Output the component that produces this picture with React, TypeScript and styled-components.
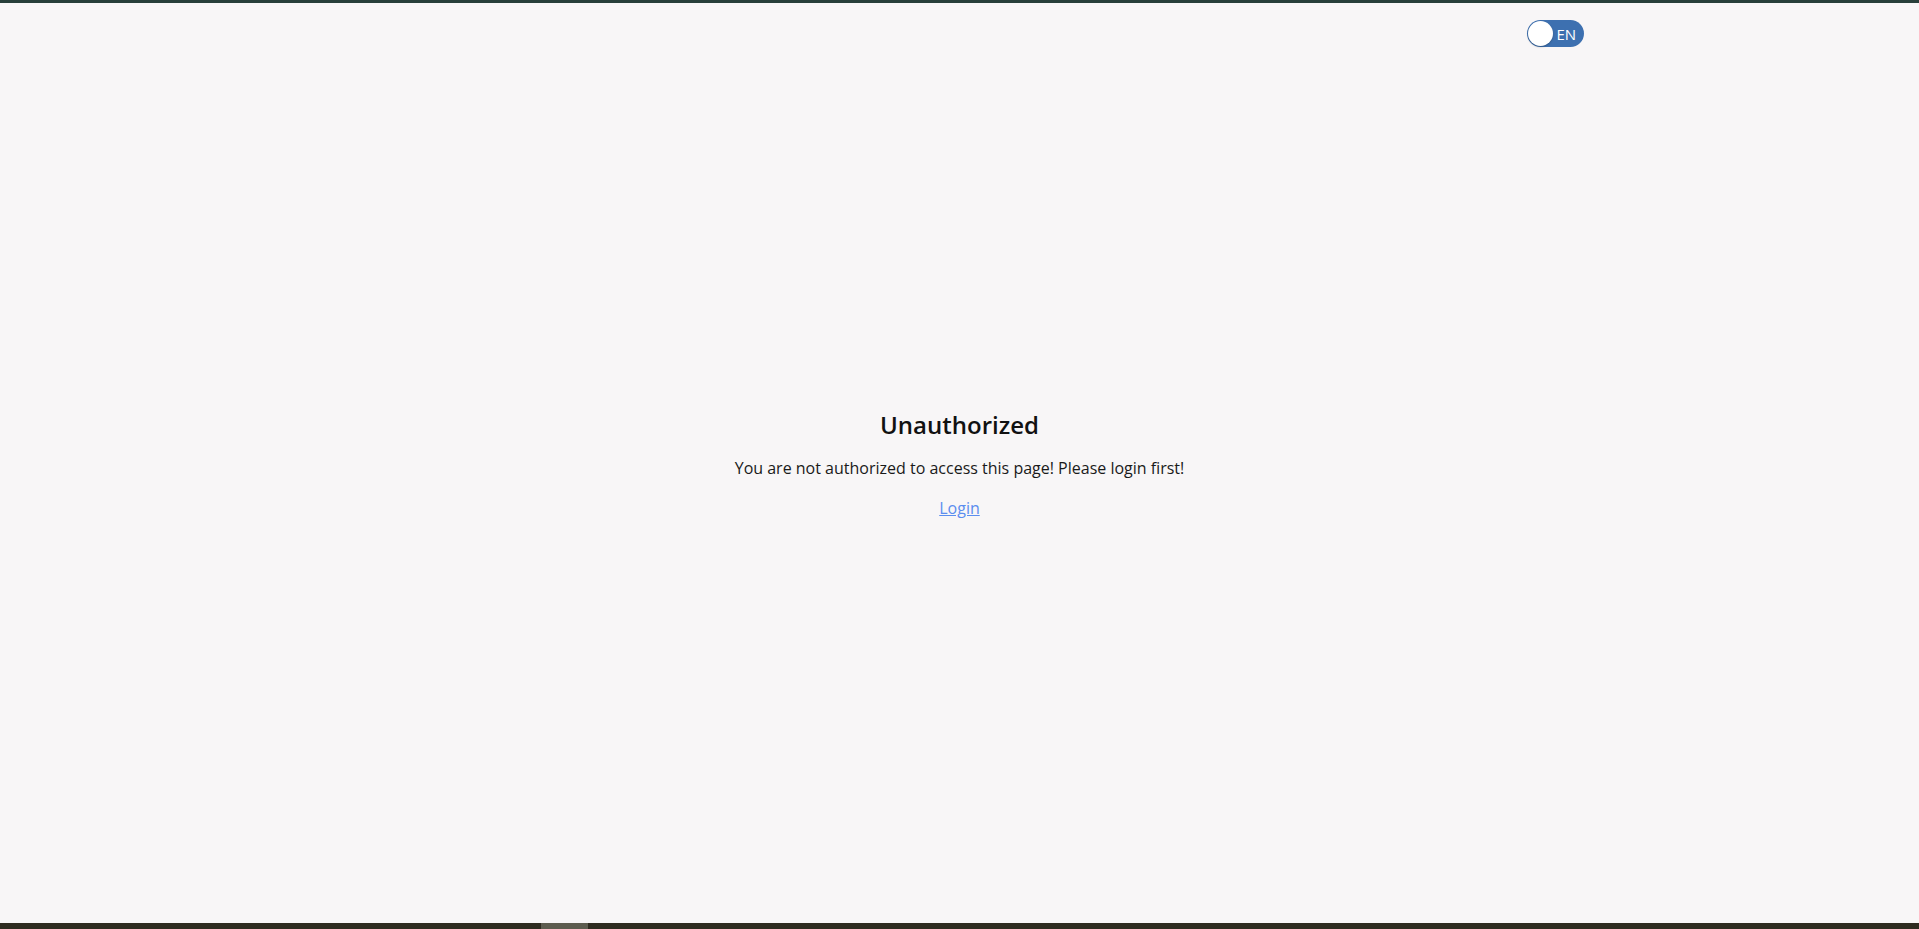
import React from "react";
import styled, { createGlobalStyle } from "styled-components";

const GlobalStyle = createGlobalStyle`
  html, body {
    margin: 0;
    padding: 0;
    height: 100%;
  }
  body {
    background-color: #f8f6f7;
    font-family: "Open Sans", "Noto Sans", sans-serif;
    color: #111;
  }
  #root {
    height: 100%;
  }
`;

const Page = styled.div`
  display: flex;
  flex-direction: column;
  height: 100vh;
  border-top: 3px solid #283f3a;
  box-sizing: border-box;
`;

const Header = styled.header`
  width: 100%;
  max-width: 1280px;
  margin: 0 auto;
  padding: 17px 16px 0;
  box-sizing: border-box;
  display: flex;
  justify-content: flex-end;
`;

const LangToggle = styled.button`
  display: flex;
  align-items: center;
  gap: 4px;
  width: 57px;
  height: 27px;
  padding: 0 0 0 1px;
  border: none;
  border-radius: 14px;
  background-color: #3d70b0;
  color: #fff;
  font-family: "Open Sans", sans-serif;
  font-size: 15px;
  cursor: pointer;
`;

const Knob = styled.span`
  width: 25px;
  height: 25px;
  border-radius: 50%;
  background-color: #fff;
  box-shadow: 0 1px 2px rgba(0, 0, 0, 0.25);
  flex: 0 0 auto;
`;

const Main = styled.main`
  flex: 1;
  display: flex;
  flex-direction: column;
  align-items: center;
  justify-content: center;
  text-align: center;
  margin-top: -44px;
`;

const Title = styled.h2`
  margin: 0 0 16px;
  font-size: 24px;
  font-weight: 600;
  color: #111;
`;

const Message = styled.p`
  margin: 0 0 18px;
  font-size: 16px;
  line-height: 22px;
  color: #1a1a1a;
`;

const LoginLink = styled.a`
  font-size: 16px;
  line-height: 22px;
  color: #5b8def;
  text-decoration: underline;
`;

const BottomBar = styled.div`
  display: flex;
  height: 6px;
  background-color: #2e2b20;
`;

const ScrollThumb = styled.div`
  margin-left: 541px;
  width: 47px;
  background-color: #5d5c4f;
`;

const App: React.FC = () => {
  return (
    <>
      <GlobalStyle />
      <Page>
        <Header>
          <LangToggle>
            <Knob />
            EN
          </LangToggle>
        </Header>
        <Main>
          <Title>Unauthorized</Title>
          <Message>
            You are not authorized to access this page! Please login first!
          </Message>
          <LoginLink href="#">Login</LoginLink>
        </Main>
        <BottomBar>
          <ScrollThumb />
        </BottomBar>
      </Page>
    </>
  );
};

export default App;
